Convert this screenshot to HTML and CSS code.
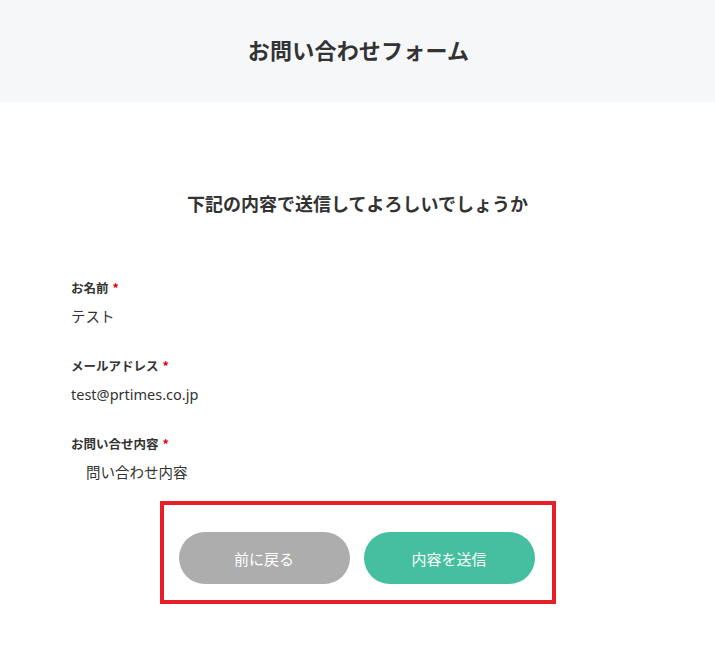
FILE: index.html
```html
<!DOCTYPE html>
<html lang="ja">
<head>
<meta charset="utf-8">
<title>お問い合わせフォーム</title>
<link rel="stylesheet" href="styles.css">
</head>
<body>
<header class="site-header">
  <h1 class="site-title">お問い合わせフォーム</h1>
</header>
<main class="confirm">
  <h2 class="confirm-heading">下記の内容で送信してよろしいでしょうか</h2>
  <dl class="fields">
    <div class="field">
      <dt class="field-label">お名前<span class="req">*</span></dt>
      <dd class="field-value">テスト</dd>
    </div>
    <div class="field">
      <dt class="field-label">メールアドレス<span class="req">*</span></dt>
      <dd class="field-value">test@prtimes.co.jp</dd>
    </div>
    <div class="field">
      <dt class="field-label">お問い合せ内容<span class="req">*</span></dt>
      <dd class="field-value field-value--text">問い合わせ内容</dd>
    </div>
  </dl>
  <div class="actions">
    <button class="btn btn-back" type="button">前に戻る</button>
    <button class="btn btn-send" type="button">内容を送信</button>
    <div class="highlight"></div>
  </div>
</main>
</body>
</html>
```
FILE: styles.css
```css
* { box-sizing: border-box; }
html, body { margin: 0; padding: 0; }
body {
  background: #fff;
  color: #333;
  font-family: "Noto Sans", "Noto Sans CJK JP", sans-serif;
  width: 715px;
  min-height: 652px;
}
.site-header {
  background: #f6f7f9;
  height: 102px;
  padding-bottom: 4px;
  display: flex;
  align-items: center;
  justify-content: center;
}
.site-title {
  margin: 0;
  font-family: "Noto Sans CJK JP", sans-serif;
  font-size: 22px;
  font-weight: 700;
  letter-spacing: 0.2px;
  color: #333;
  line-height: 1;
  padding-left: 2px;
}
.confirm {
  padding: 86px 0 60px 71px;
}
.confirm-heading {
  margin: 0 0 0 -71px;
  text-align: center;
  font-family: "Noto Sans CJK JP", sans-serif;
  font-size: 18px;
  font-weight: 700;
  line-height: 30px;
  color: #333;
}
.fields {
  margin: 60px 0 0;
}
.field { margin-bottom: 29px; }
.field-label {
  font-family: "Noto Sans CJK JP", sans-serif;
  font-size: 12.5px;
  font-weight: 700;
  line-height: 20px;
  color: #333;
}
.req {
  color: #e60012;
  margin-left: 4px;
}
.field-value {
  margin: 7px 0 0;
  font-size: 14.5px;
  line-height: 22px;
  color: #333;
}
.field-value--text { padding-left: 15px; }
.actions {
  position: relative;
  margin: 49px 0 0 -71px;
  padding-right: 2px;
  display: flex;
  justify-content: center;
  gap: 14px;
}
.btn {
  width: 171px;
  height: 52px;
  border: none;
  border-radius: 26px;
  color: #fff;
  font-family: "Noto Sans CJK JP", sans-serif;
  font-size: 15px;
  padding: 0;
}
.btn-back { background: #acadac; }
.btn-send { background: #45bf9f; }
.highlight {
  position: absolute;
  left: 160px;
  top: -31px;
  width: 396px;
  height: 103px;
  border: 4px solid #e81e28;
  pointer-events: none;
}
```
